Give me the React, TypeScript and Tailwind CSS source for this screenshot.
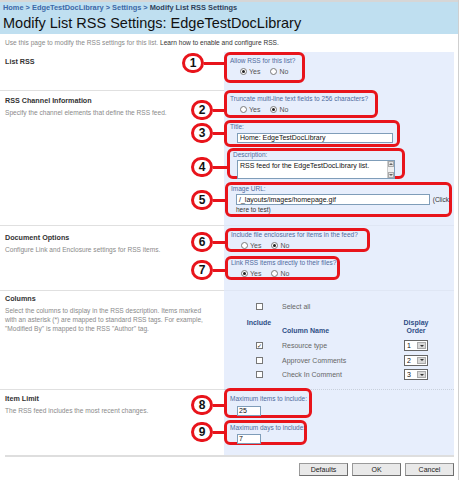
import type { ReactNode } from "react"

function Radio({ checked }: { checked?: boolean }) {
  return (
    <span className="inline-flex w-[7px] h-[7px] rounded-full border border-[#7a7a7a] bg-white items-center justify-center mr-[2px]">
      {checked && <span className="w-[3px] h-[3px] rounded-full bg-[#222]" />}
    </span>
  )
}

function YesNo({ yes }: { yes: boolean }) {
  return (
    <div className="flex items-center ml-[10px] mt-[3px] text-[7px] text-[#555] leading-[7px]">
      <Radio checked={yes} />
      <span className="mr-[10px]">Yes</span>
      <Radio checked={!yes} />
      <span>No</span>
    </div>
  )
}

function Check({ checked }: { checked?: boolean }) {
  return (
    <span className="inline-flex w-[7px] h-[7px] border border-[#777] bg-white items-center justify-center text-[6px] leading-none text-[#222]">
      {checked ? "✓" : ""}
    </span>
  )
}

function OrderSelect({ value }: { value: number }) {
  return (
    <div className="flex w-[24px] h-[11px] border border-[#666] bg-white">
      <span className="flex-1 pl-[2px] text-[7px] leading-[9px] text-[#111]">{value}</span>
      <span className="w-[9px] my-[1px] mr-[1px] bg-[#d8d8d8] border border-[#aaa] flex items-center justify-center">
        <span className="border-x-[2px] border-t-[2px] border-x-transparent border-t-[#333]" />
      </span>
    </div>
  )
}

function Callout({
  n,
  box,
  pin,
  line,
  children,
}: {
  n: number
  box: string
  pin: string
  line: string
  children: ReactNode
}) {
  return (
    <div className={"relative border-[3px] border-[#e8141b] rounded-[6px] pl-[3px] " + box}>
      <div className={"absolute right-full flex items-center " + pin}>
        <div className="w-[22px] h-[20px] rounded-full border-[3px] border-[#e8141b] bg-white flex items-center justify-center text-[12px] font-bold text-[#111] leading-none">
          {n}
        </div>
        <div className={"h-[3px] bg-[#e8141b] " + line} />
      </div>
      {children}
    </div>
  )
}

function Label({ children }: { children: ReactNode }) {
  return <div className="text-[6.5px] leading-[8px] text-[#4f6b9c] whitespace-nowrap">{children}</div>
}

function Side({ title, children }: { title: string; children?: ReactNode }) {
  return (
    <div className="w-[225px] pl-[5px] pr-[18px]">
      <div className="text-[7.2px] font-bold text-[#333] leading-[9px]">{title}</div>
      {children && <div className="mt-[3px] text-[6.6px] leading-[9px] text-[#8a8a8a]">{children}</div>}
    </div>
  )
}

export default function App() {
  return (
    <div className="w-[459px] h-[480px] overflow-hidden bg-white border-r border-[#cfcfcf] font-['Liberation_Sans',Arial,sans-serif]">
      <div className="h-[2px] bg-[#d6d6d6]" />
      <div className="h-[32px] bg-[#bfdff0] px-[3px] pt-[1px]">
        <div className="text-[7.4px] font-bold text-[#3c68a8] leading-[9px]">
          Home &gt; EdgeTestDocLibrary &gt; Settings &gt; <span className="text-[#2f3f5a]">Modify List RSS Settings</span>
        </div>
        <div className="mt-[2px] text-[14.5px] leading-[18px] text-[#111]">Modify List RSS Settings: EdgeTestDocLibrary</div>
      </div>
      <div className="h-[18px] flex items-center px-[5px] text-[6.6px] text-[#8a8a8a] whitespace-nowrap">
        Use this page to modify the RSS settings for this list.&nbsp;<span className="text-[#333]">Learn how to enable and configure RSS.</span>
      </div>

      {/* List RSS */}
      <div className="flex h-[38px] mr-[4px]">
        <div className="pt-[5px]">
          <Side title="List RSS" />
        </div>
        <div className="flex-1 bg-[#e7eefc] ml-[-1px]">
          <Callout n={1} box="w-[81px] h-[31px] pt-[2px]" pin="top-[-2px]" line="w-[23px]">
            <Label>Allow RSS for this list?</Label>
            <YesNo yes={true} />
          </Callout>
        </div>
      </div>

      {/* RSS Channel Information */}
      <div className="flex h-[135px] mr-[4px]">
        <div className="border-t border-[#e0e0e0] pt-[5px]">
          <Side title="RSS Channel Information">Specify the channel elements that define the RSS feed.</Side>
        </div>
        <div className="flex-1 bg-[#e7eefc] ml-[-1px] flex flex-col">
          <Callout n={2} box="w-[154px] h-[28px] pt-[2px]" pin="top-[7px]" line="w-[14px]">
            <Label>Truncate multi-line text fields to 256 characters?</Label>
            <YesNo yes={false} />
          </Callout>
          <Callout n={3} box="mt-[2px] w-[176px] h-[27px] pt-[0px]" pin="top-[0px]" line="w-[14px]">
            <Label>Title:</Label>
            <div className="ml-[7px] mt-[2px] w-[156px] h-[10px] border border-[#7f9db9] bg-white text-[7px] leading-[8px] pl-[2px] text-[#111]">
              Home: EdgeTestDocLibrary
            </div>
          </Callout>
          <Callout n={4} box="mt-[1px] ml-[3px] w-[178px] h-[31px] pt-[0px]" pin="top-[6px]" line="w-[17px]">
            <Label>Description:</Label>
            <div className="ml-[4px] mt-[1px] w-[158px] h-[19px] border border-[#7f9db9] bg-white flex">
              <div className="flex-1 text-[7px] leading-[8px] pl-[2px] pt-[1px] text-[#111] whitespace-nowrap">
                RSS feed for the EdgeTestDocLibrary list.
              </div>
              <div className="w-[7px] flex flex-col justify-between bg-[#f0f0f0] border-l border-[#ccc]">
                <span className="h-[6px] border border-[#aaa] bg-[#e4e4e4] flex items-center justify-center">
                  <span className="border-x-[2px] border-b-[2px] border-x-transparent border-b-[#666]" />
                </span>
                <span className="h-[6px] border border-[#aaa] bg-[#e4e4e4] flex items-center justify-center">
                  <span className="border-x-[2px] border-t-[2px] border-x-transparent border-t-[#666]" />
                </span>
              </div>
            </div>
          </Callout>
          <Callout n={5} box="mt-[3px] ml-[1px] w-[227px] h-[35px] pt-[0px]" pin="top-[5px]" line="w-[15px]">
            <Label>Image URL:</Label>
            <div className="flex items-center mt-[1px] ml-[5px]">
              <div className="w-[194px] h-[11px] border border-[#7f9db9] bg-white text-[7px] leading-[9px] pl-[2px] text-[#111]">
                /_layouts/images/homepage.gif
              </div>
              <span className="ml-[3px] text-[6.5px] text-[#333]">(Click</span>
            </div>
            <div className="ml-[5px] mt-[1px] text-[6.5px] leading-[7px] text-[#333]">here to test)</div>
          </Callout>
        </div>
      </div>

      {/* Document Options */}
      <div className="flex h-[65px] mr-[4px]">
        <div className="border-t border-[#e0e0e0] pt-[7px]">
          <Side title="Document Options">Configure Link and Enclosure settings for RSS items.</Side>
        </div>
        <div className="flex-1 bg-[#e7eefc] ml-[-1px] border-t border-[#dfe6f4] flex flex-col">
          <Callout n={6} box="mt-[2px] ml-[1px] w-[145px] h-[24px] pt-[0px]" pin="top-[1px]" line="w-[15px]">
            <Label>Include file enclosures for items in the feed?</Label>
            <YesNo yes={false} />
          </Callout>
          <Callout n={7} box="mt-[4px] ml-[1px] w-[115px] h-[24px] pt-[0px]" pin="top-[1px]" line="w-[15px]">
            <Label>Link RSS items directly to their files?</Label>
            <YesNo yes={true} />
          </Callout>
        </div>
      </div>

      {/* Columns */}
      <div className="flex h-[99px] mr-[4px]">
        <div className="border-t border-[#e0e0e0] pt-[3px]">
          <Side title="Columns">
            Select the columns to display in the RSS description. Items marked with an asterisk (*) are mapped to
            standard RSS tags. For example, "Modified By" is mapped to the RSS "Author" tag.
          </Side>
        </div>
        <div className="flex-1 bg-[#e7eefc] ml-[-1px] border-t border-[#dfe6f4] pl-[15px] pt-[11px]">
          <div className="grid grid-cols-[40px_121px_32px] items-center text-[7px] leading-[9px]">
            <div className="flex justify-center">
              <Check />
            </div>
            <div className="pl-[3px] text-[#666]">Select all</div>
            <div />
          </div>
          <div className="grid grid-cols-[40px_121px_32px] items-end mt-[8px] text-[7px] leading-[8px] font-bold text-[#2f4f86]">
            <div className="text-center self-start">Include</div>
            <div className="pl-[3px]">Column Name</div>
            <div className="text-center">
              Display
              <br />
              Order
            </div>
          </div>
          <div className="mt-[5px] flex flex-col gap-[3.5px]">
            {[
              { name: "Resource type", on: true, order: 1 },
              { name: "Approver Comments", on: false, order: 2 },
              { name: "Check In Comment", on: false, order: 3 },
            ].map((r) => (
              <div key={r.name} className="grid grid-cols-[40px_121px_32px] items-center text-[7px] leading-[9px]">
                <div className="flex justify-center">
                  <Check checked={r.on} />
                </div>
                <div className="pl-[3px] text-[#666]">{r.name}</div>
                <div className="flex justify-center">
                  <OrderSelect value={r.order} />
                </div>
              </div>
            ))}
          </div>
        </div>
      </div>

      {/* Item Limit */}
      <div className="flex h-[66px] mr-[4px]">
        <div className="border-t border-[#e0e0e0] pt-[4px]">
          <Side title="Item Limit">The RSS feed includes the most recent changes.</Side>
        </div>
        <div className="flex-1 bg-[#e7eefc] ml-[-1px] border-t border-dotted border-[#c8d0dc] flex flex-col">
          <Callout n={8} box="mt-[-2px] w-[88px] h-[30px] pt-[4px]" pin="top-[4px]" line="w-[14px]">
            <Label>Maximum items to include:</Label>
            <div className="ml-[7px] mt-[3px] w-[24px] h-[10px] border border-[#7f9db9] bg-white text-[7px] leading-[8px] pl-[1px] text-[#111]">
              25
            </div>
          </Callout>
          <Callout n={9} box="mt-[2px] w-[83px] h-[25px] pt-[1px]" pin="top-[-1px]" line="w-[14px]">
            <Label>Maximum days to include:</Label>
            <div className="ml-[7px] mt-[2px] w-[24px] h-[10px] border border-[#7f9db9] bg-white text-[7px] leading-[8px] pl-[1px] text-[#111]">
              7
            </div>
          </Callout>
        </div>
      </div>

      <div className="ml-[5px] mr-[4px] h-[2px] bg-[#dedede]" />
      <div className="flex justify-end gap-[4px] mr-[4px] mt-[6px]">
        {["Defaults", "OK", "Cancel"].map((b) => (
          <button
            key={b}
            className="w-[49px] h-[13px] border border-[#9a9a9a] border-r-[#6f6f6f] border-b-[#6f6f6f] bg-[#e9e9e9] text-[7px] leading-[11px] text-[#222]"
          >
            {b}
          </button>
        ))}
      </div>
    </div>
  )
}
